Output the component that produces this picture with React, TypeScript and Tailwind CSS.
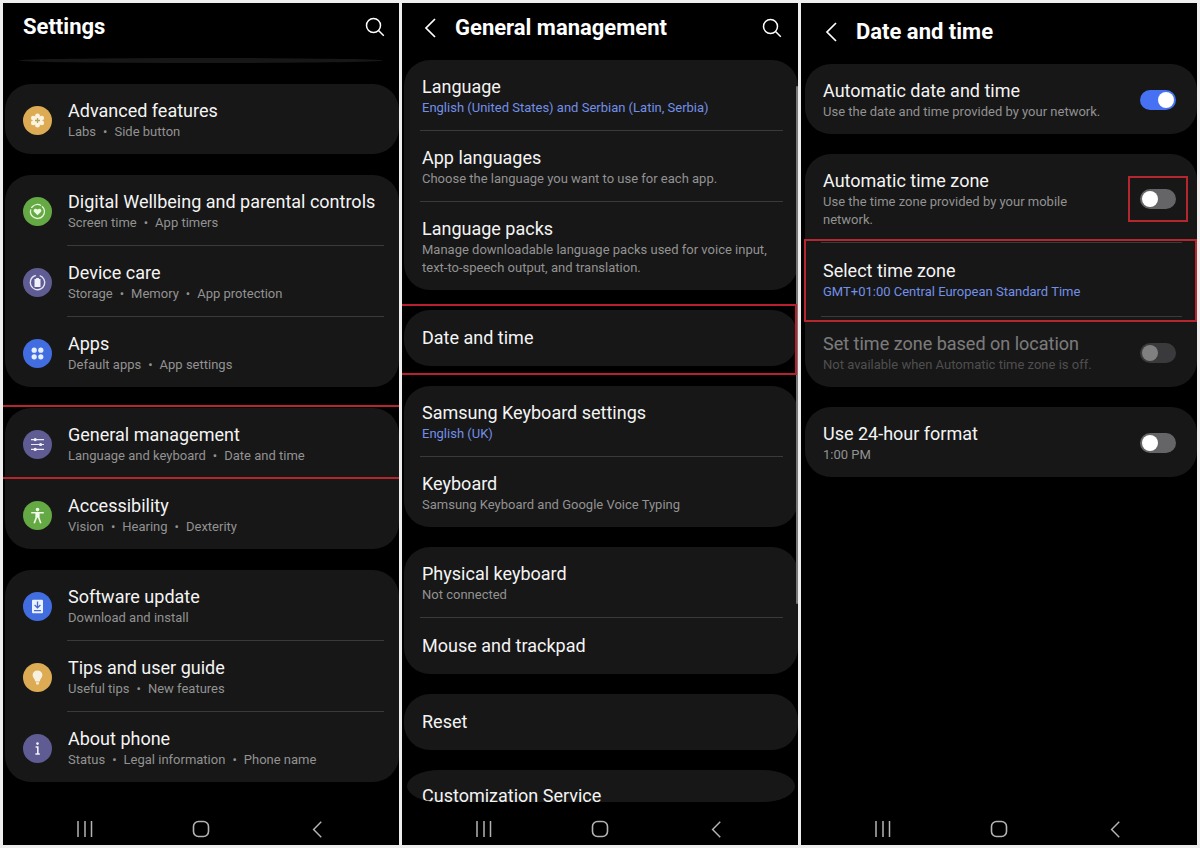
import type { ReactNode } from "react";
import clsx from "clsx";

type Row = {
  title: string;
  sub?: string[];
  icon?: ReactNode;
  color?: string;
  link?: boolean;
  highlight?: "lines" | "box";
};

const ChevronLeft = ({ className }: { className?: string }) => (
  <svg viewBox="0 0 12 20" className={className} fill="none" stroke="currentColor" strokeWidth="1.7">
    <path d="M11 1 2 10l9 9" />
  </svg>
);

const icons = {
  flower: (
    <svg viewBox="0 0 29 29" className="size-full">
      <g fill="#fbf3df">
        <circle cx="14.5" cy="9.8" r="2.4" />
        <circle cx="14.5" cy="19.2" r="2.4" />
        <circle cx="10.3" cy="12.1" r="2.4" />
        <circle cx="18.7" cy="12.1" r="2.4" />
        <circle cx="10.3" cy="16.9" r="2.4" />
        <circle cx="18.7" cy="16.9" r="2.4" />
        <circle cx="14.5" cy="14.5" r="4.6" />
      </g>
      <path d="M14.5 12v5M12 14.5h5" stroke="#b3a45a" strokeWidth="1.3" />
    </svg>
  ),
  heart: (
    <svg viewBox="0 0 29 29" className="size-full">
      <circle cx="14.5" cy="14.5" r="7" fill="none" stroke="#e3f7d8" strokeWidth="1.3" strokeDasharray="30 1.5 11 1.5" transform="rotate(-50 14.5 14.5)" />
      <path d="M14.5 18.3 11.2 15c-1.7-2 .9-4.7 3.3-2.4 2.4-2.3 5 .4 3.3 2.4z" fill="#eafbe2" />
    </svg>
  ),
  care: (
    <svg viewBox="0 0 29 29" className="size-full">
      <circle cx="14.5" cy="14.5" r="7.2" fill="none" stroke="#e6e4f7" strokeWidth="1.4" strokeDasharray="41 4.2" transform="rotate(-72 14.5 14.5)" />
      <path d="M11.5 11h1.6v-1h2.8v1h1.6v8h-6z" fill="#f2f1fb" />
    </svg>
  ),
  apps: (
    <svg viewBox="0 0 29 29" className="size-full" fill="#e4f0ff">
      <circle cx="11.2" cy="11.2" r="2.6" />
      <circle cx="17.8" cy="11.2" r="2.6" />
      <circle cx="11.2" cy="17.8" r="2.6" />
      <circle cx="17.8" cy="17.8" r="2.6" />
    </svg>
  ),
  sliders: (
    <svg viewBox="0 0 29 29" className="size-full">
      <path d="M8 9.6h13M8 14.5h13M8 19.4h13" stroke="#eceafa" strokeWidth="1.1" />
      <g fill="#f4f3fc">
        <circle cx="12.2" cy="9.6" r="1.6" />
        <circle cx="17.6" cy="14.5" r="1.6" />
        <circle cx="12.2" cy="19.4" r="1.6" />
      </g>
    </svg>
  ),
  person: (
    <svg viewBox="0 0 29 29" className="size-full">
      <circle cx="14.5" cy="8.6" r="1.8" fill="#f0fbea" />
      <path d="M8.2 11.8h12.6M14.5 11.8v4.4M13.4 12.5v3.8l-2.2 6M15.6 12.5v3.8l2.2 6" fill="none" stroke="#f0fbea" strokeWidth="1.6" />
      <path d="M12.6 11.5h3.8v5h-3.8z" fill="#f0fbea" />
    </svg>
  ),
  download: (
    <svg viewBox="0 0 29 29" className="size-full">
      <rect x="9" y="7.8" width="11" height="13.4" rx="1" fill="#eaf1ff" />
      <path d="M14.5 9.6v6M11.6 13l2.9 2.8 2.9-2.8M11 18.6h7" fill="none" stroke="#4a66cf" strokeWidth="1.3" />
    </svg>
  ),
  bulb: (
    <svg viewBox="0 0 29 29" className="size-full">
      <path d="M14.5 7.4a4.9 4.9 0 0 0-4.9 4.9c0 2.4 2.4 3.6 2.7 6.2h4.4c.3-2.6 2.7-3.8 2.7-6.2a4.9 4.9 0 0 0-4.9-4.9zM12.8 19.2h3.4l-.6 2.4h-2.2z" fill="#f7efe0" />
    </svg>
  ),
  info: (
    <svg viewBox="0 0 29 29" className="size-full">
      <circle cx="14.5" cy="9.6" r="1.3" fill="#f2f1fb" />
      <path d="M12.6 13h2.2v6.6M12.4 20h4.4" fill="none" stroke="#f2f1fb" strokeWidth="1.6" />
    </svg>
  ),
};

const settings: Row[][] = [
  [{ title: "Advanced features", sub: ["Labs", "Side button"], icon: icons.flower, color: "bg-[#dcab54]" }],
  [
    { title: "Digital Wellbeing and parental controls", sub: ["Screen time", "App timers"], icon: icons.heart, color: "bg-[#64a944]" },
    { title: "Device care", sub: ["Storage", "Memory", "App protection"], icon: icons.care, color: "bg-[#5f5b93]" },
    { title: "Apps", sub: ["Default apps", "App settings"], icon: icons.apps, color: "bg-[#426de0]" },
  ],
  [
    { title: "General management", sub: ["Language and keyboard", "Date and time"], icon: icons.sliders, color: "bg-[#5f5b93]", highlight: "lines" },
    { title: "Accessibility", sub: ["Vision", "Hearing", "Dexterity"], icon: icons.person, color: "bg-[#64a944]" },
  ],
  [
    { title: "Software update", sub: ["Download and install"], icon: icons.download, color: "bg-[#426de0]" },
    { title: "Tips and user guide", sub: ["Useful tips", "New features"], icon: icons.bulb, color: "bg-[#dcab54]" },
    { title: "About phone", sub: ["Status", "Legal information", "Phone name"], icon: icons.info, color: "bg-[#5f5b93]" },
  ],
];

const general: Row[][] = [
  [
    { title: "Language", sub: ["English (United States) and Serbian (Latin, Serbia)"], link: true },
    { title: "App languages", sub: ["Choose the language you want to use for each app."] },
    { title: "Language packs", sub: ["Manage downloadable language packs used for voice input, text-to-speech output, and translation."] },
  ],
  [{ title: "Date and time", highlight: "box" }],
  [
    { title: "Samsung Keyboard settings", sub: ["English (UK)"], link: true },
    { title: "Keyboard", sub: ["Samsung Keyboard and Google Voice Typing"] },
  ],
  [{ title: "Physical keyboard", sub: ["Not connected"] }, { title: "Mouse and trackpad" }],
  [{ title: "Reset" }],
];

function Text({ title, sub, link }: Row) {
  return (
    <span className="block min-w-0 flex-1">
      <span className="block text-[18px] leading-6 text-[#f4f4f4]">{title}</span>
      {sub && (
        <span className={clsx("flex gap-[7px] text-[13px] leading-[18px]", link ? "text-[#7390e8]" : "text-[#929292]")}>
          {sub.map((s, i) => (
            <span key={s} className="flex gap-[7px]">
              {i > 0 && <span>•</span>}
              <span>{s}</span>
            </span>
          ))}
        </span>
      )}
    </span>
  );
}

function Divider({ inset }: { inset?: boolean }) {
  return <div className={clsx("mr-[15px] h-px bg-[#3a3a3a]", inset ? "ml-[62px]" : "ml-4")} />;
}

function Card({ children }: { children: ReactNode }) {
  return <section className="rounded-[26px] bg-[#171717]">{children}</section>;
}

function RowList({ rows }: { rows: Row[] }) {
  return (
    <Card>
      {rows.map((row, i) => (
        <div key={row.title} className="relative">
          {i > 0 && <Divider inset={!!row.icon} />}
          <button type="button" className={clsx("flex w-full items-center gap-4 pl-[18px] pr-4 text-left", row.sub ? "pt-[15px] pb-[13px]" : "py-4")}>
            {row.icon && <span className={clsx("size-[29px] shrink-0 rounded-full", row.color)}>{row.icon}</span>}
            <Text {...row} />
          </button>
          {row.highlight === "lines" && <div className="pointer-events-none absolute -top-[3px] -bottom-px -left-0.5 right-0 z-10 border-y-2 border-[#b5262f]" />}
          {row.highlight === "box" && <div className="pointer-events-none absolute -top-[6px] -bottom-[9px] -left-0.5 right-px z-10 border-2 border-l-0 border-[#b81f30]" />}
        </div>
      ))}
    </Card>
  );
}

type ToggleProps = { id: string; title: string; sub: string; on?: boolean; disabled?: boolean; highlight?: boolean };

function ToggleRow({ id, title, sub, on, disabled, highlight }: ToggleProps) {
  return (
    <div className={clsx("flex items-center gap-8 pt-[15px] pb-[13px] pl-[18px] pr-[21px]", disabled && "opacity-45")}>
      <label htmlFor={id} className="min-w-0 flex-1">
        <Text title={title} sub={[sub]} />
      </label>
      <span className="relative flex">
        <input
          id={id}
          type="checkbox"
          role="switch"
          defaultChecked={on}
          disabled={disabled}
          className="h-5 w-9 appearance-none rounded-full bg-[#656467] p-[2px] before:block before:size-4 before:rounded-full before:bg-white checked:bg-[#4571f2] checked:before:ml-4"
        />
        {highlight && <span className="pointer-events-none absolute -inset-x-3 -inset-y-[13px] border-2 border-[#b5262f]" />}
      </span>
    </div>
  );
}

function Header({ title, back, search, className }: { title: string; back?: boolean; search?: boolean; className: string }) {
  return (
    <header className={clsx("flex items-center text-white", className)}>
      {back && (
        <button type="button" aria-label="Back" className="mr-[19px]">
          <ChevronLeft className="h-5 w-3" />
        </button>
      )}
      <h1 className="flex-1 text-[22px] leading-7 font-bold">{title}</h1>
      {search && (
        <button type="button" aria-label="Search">
          <svg viewBox="0 0 20 20" className="size-5" fill="none" stroke="currentColor" strokeWidth="1.5">
            <circle cx="8.5" cy="8.5" r="7" />
            <path d="m13.5 13.5 5.3 5.3" />
          </svg>
        </button>
      )}
    </header>
  );
}

function NavBar() {
  return (
    <nav className="mt-auto flex h-8 items-center justify-between px-[73px] text-[#b4b4b4]">
      <button type="button" aria-label="Recents">
        <svg viewBox="0 0 18 16" className="h-4 w-[18px]" stroke="currentColor" strokeWidth="1.5">
          <path d="M2 0v16M9 0v16M15.5 0v16" />
        </svg>
      </button>
      <button type="button" aria-label="Home">
        <svg viewBox="0 0 18 18" className="size-[18px]" fill="none" stroke="currentColor" strokeWidth="1.6">
          <rect x="1.5" y="1.5" width="15" height="15" rx="5" />
        </svg>
      </button>
      <button type="button" aria-label="Back" className="px-[3px]">
        <ChevronLeft className="h-[17px] w-3" />
      </button>
    </nav>
  );
}

function Phone({ children }: { children: ReactNode }) {
  return <div className="relative flex min-w-0 flex-col bg-black">{children}<NavBar /></div>;
}

export default function App() {
  return (
    <main className="grid min-h-screen grid-cols-3 gap-[3px] bg-[#eeeeee] p-[3px] font-['Roboto',sans-serif]">
      <Phone>
        <Header title="Settings" search className="h-12 pl-5 pr-[14px]" />
        <div className="mx-4 mt-[7px] mb-[21px] h-[5px] rounded-[50%] bg-[#171717]" />
        <div className="flex flex-col gap-[21px] pl-0.5">
          {settings.map((rows) => (
            <RowList key={rows[0].title} rows={rows} />
          ))}
        </div>
      </Phone>

      <Phone>
        <Header title="General management" back search className="mb-[7px] h-[50px] pl-[22px] pr-4" />
        <div className="flex flex-col gap-5 pl-0.5">
          {general.map((rows) => (
            <RowList key={rows[0].title} rows={rows} />
          ))}
          {/* cut off by the end of the scroll area */}
          <section className="mx-[3px] h-8 overflow-hidden rounded-[32px/16px] bg-[#171717]">
            <button type="button" className="px-[15px] py-[14px] text-[18px] leading-6 text-[#f4f4f4]">Customization Service</button>
          </section>
        </div>
        <div className="absolute top-[83px] right-0 h-[518px] w-[2px] rounded-full bg-[#777777]" />
      </Phone>

      <Phone>
        <Header title="Date and time" back className="mb-[3px] h-[58px] pl-6 pr-4" />
        <div className="flex flex-col gap-5 pl-1">
          <Card>
            <ToggleRow id="auto-date" title="Automatic date and time" sub="Use the date and time provided by your network." on />
          </Card>
          <Card>
            <ToggleRow id="auto-zone" title="Automatic time zone" sub="Use the time zone provided by your mobile network." highlight />
            <div className="relative">
              <Divider />
              <button type="button" className="w-full px-[18px] pt-4 pb-[15px] text-left">
                <Text title="Select time zone" sub={["GMT+01:00 Central European Standard Time"]} link />
              </button>
              <Divider />
              <div className="pointer-events-none absolute -top-[3px] -bottom-[5px] -left-px right-0 border-2 border-[#b5262f]" />
            </div>
            <ToggleRow id="zone-location" title="Set time zone based on location" sub="Not available when Automatic time zone is off." disabled />
          </Card>
          <Card>
            <ToggleRow id="hour-format" title="Use 24-hour format" sub="1:00 PM" />
          </Card>
        </div>
      </Phone>
    </main>
  );
}
